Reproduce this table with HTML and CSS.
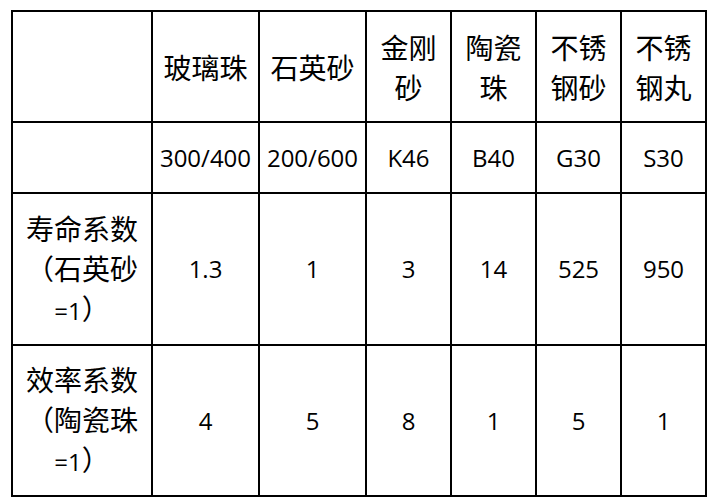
FILE: index.html
```html
<!DOCTYPE html>
<html lang="zh-CN">
<head>
<meta charset="utf-8">
<link rel="stylesheet" href="styles.css">
</head>
<body>
<table class="grid">
  <tr class="r1">
    <td class="c1"></td>
    <td class="c2">玻璃珠</td>
    <td class="c2">石英砂</td>
    <td class="c3">金刚<br>砂</td>
    <td class="c3">陶瓷<br>珠</td>
    <td class="c3">不锈<br>钢砂</td>
    <td class="c3">不锈<br>钢丸</td>
  </tr>
  <tr class="r2">
    <td></td>
    <td class="num">300/400</td>
    <td class="num">200/600</td>
    <td class="num">K46</td>
    <td class="num">B40</td>
    <td class="num">G30</td>
    <td class="num">S30</td>
  </tr>
  <tr class="r3">
    <td class="label">寿命系数<br>（石英砂<br><span class="lat">=1</span>）</td>
    <td class="num">1.3</td>
    <td class="num">1</td>
    <td class="num">3</td>
    <td class="num">14</td>
    <td class="num">525</td>
    <td class="num">950</td>
  </tr>
  <tr class="r4">
    <td class="label">效率系数<br>（陶瓷珠<br><span class="lat">=1</span>）</td>
    <td class="num">4</td>
    <td class="num">5</td>
    <td class="num">8</td>
    <td class="num">1</td>
    <td class="num">5</td>
    <td class="num">1</td>
  </tr>
</table>
</body>
</html>
```
FILE: styles.css
```css
html, body {
  margin: 0;
  padding: 0;
  background: #fff;
}
body {
  padding: 10px 0 0 11px;
}
.grid {
  border-collapse: separate;
  border-spacing: 0;
  table-layout: fixed;
  width: 696px;
  border-left: 2px solid #000;
  border-top: 2px solid #000;
  font-family: "Noto Sans CJK SC", "Noto Sans", sans-serif;
  font-size: 28px;
  line-height: 40px;
  color: #000;
}
.grid td {
  box-sizing: border-box;
  padding: 0;
  border-right: 2px solid #000;
  border-bottom: 2px solid #000;
  text-align: center;
  vertical-align: middle;
}
.c1 { width: 140px; }
.c2 { width: 107px; }
.c3 { width: 85px; }
.r1 { height: 111px; }
.r2 { height: 71px; }
.r3 { height: 152px; }
.r4 { height: 151px; }
.num, .lat {
  font-family: "Open Sans", "Noto Sans", sans-serif;
  font-size: 24px;
}
```
